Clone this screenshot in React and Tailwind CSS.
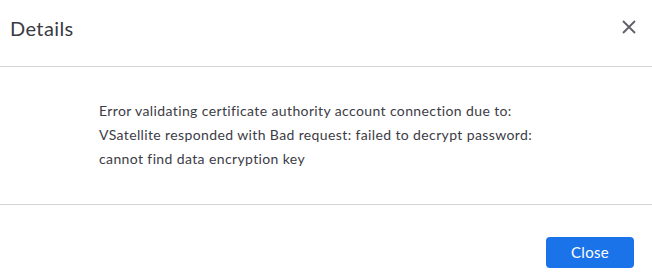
import React from 'react';

function App() {
  return (
    <div className="w-[652px] h-[279px] bg-white text-[#3c3c46] font-['Lato','Open_Sans',sans-serif] flex flex-col">
      {/* Header */}
      <div className="h-[67px] flex items-center justify-between pl-[10px] pr-[16px] border-b border-[#d4d4d4]">
        <h2 className="text-[20px] tracking-[0.4px] text-[#3a3a44] leading-none -mt-[10px]">Details</h2>
        <button className="w-[14px] h-[14px] -mt-[12px] text-[#5f6068]">
          <svg viewBox="0 0 14 14" width="14" height="14" fill="none" stroke="currentColor" strokeWidth="1.8">
            <path d="M1 1 L13 13 M13 1 L1 13" />
          </svg>
        </button>
      </div>

      {/* Body */}
      <div className="h-[138px] pl-[99px] pt-[32px] border-b border-[#d4d4d4]">
        <p className="text-[14px] leading-[24px] tracking-[0.38px] text-[#3c3c46]">
          Error validating certificate authority account connection due to:
          <br />
          VSatellite responded with Bad request: failed to decrypt password:
          <br />
          cannot find data encryption key
        </p>
      </div>

      {/* Footer */}
      <div className="flex justify-end pr-[18px] pt-[32px]">
        <button className="w-[88px] h-[31px] rounded-[4px] bg-[#1a73e8] text-white text-[15px] tracking-[0.3px]">
          Close
        </button>
      </div>
    </div>
  );
}

export default App;
